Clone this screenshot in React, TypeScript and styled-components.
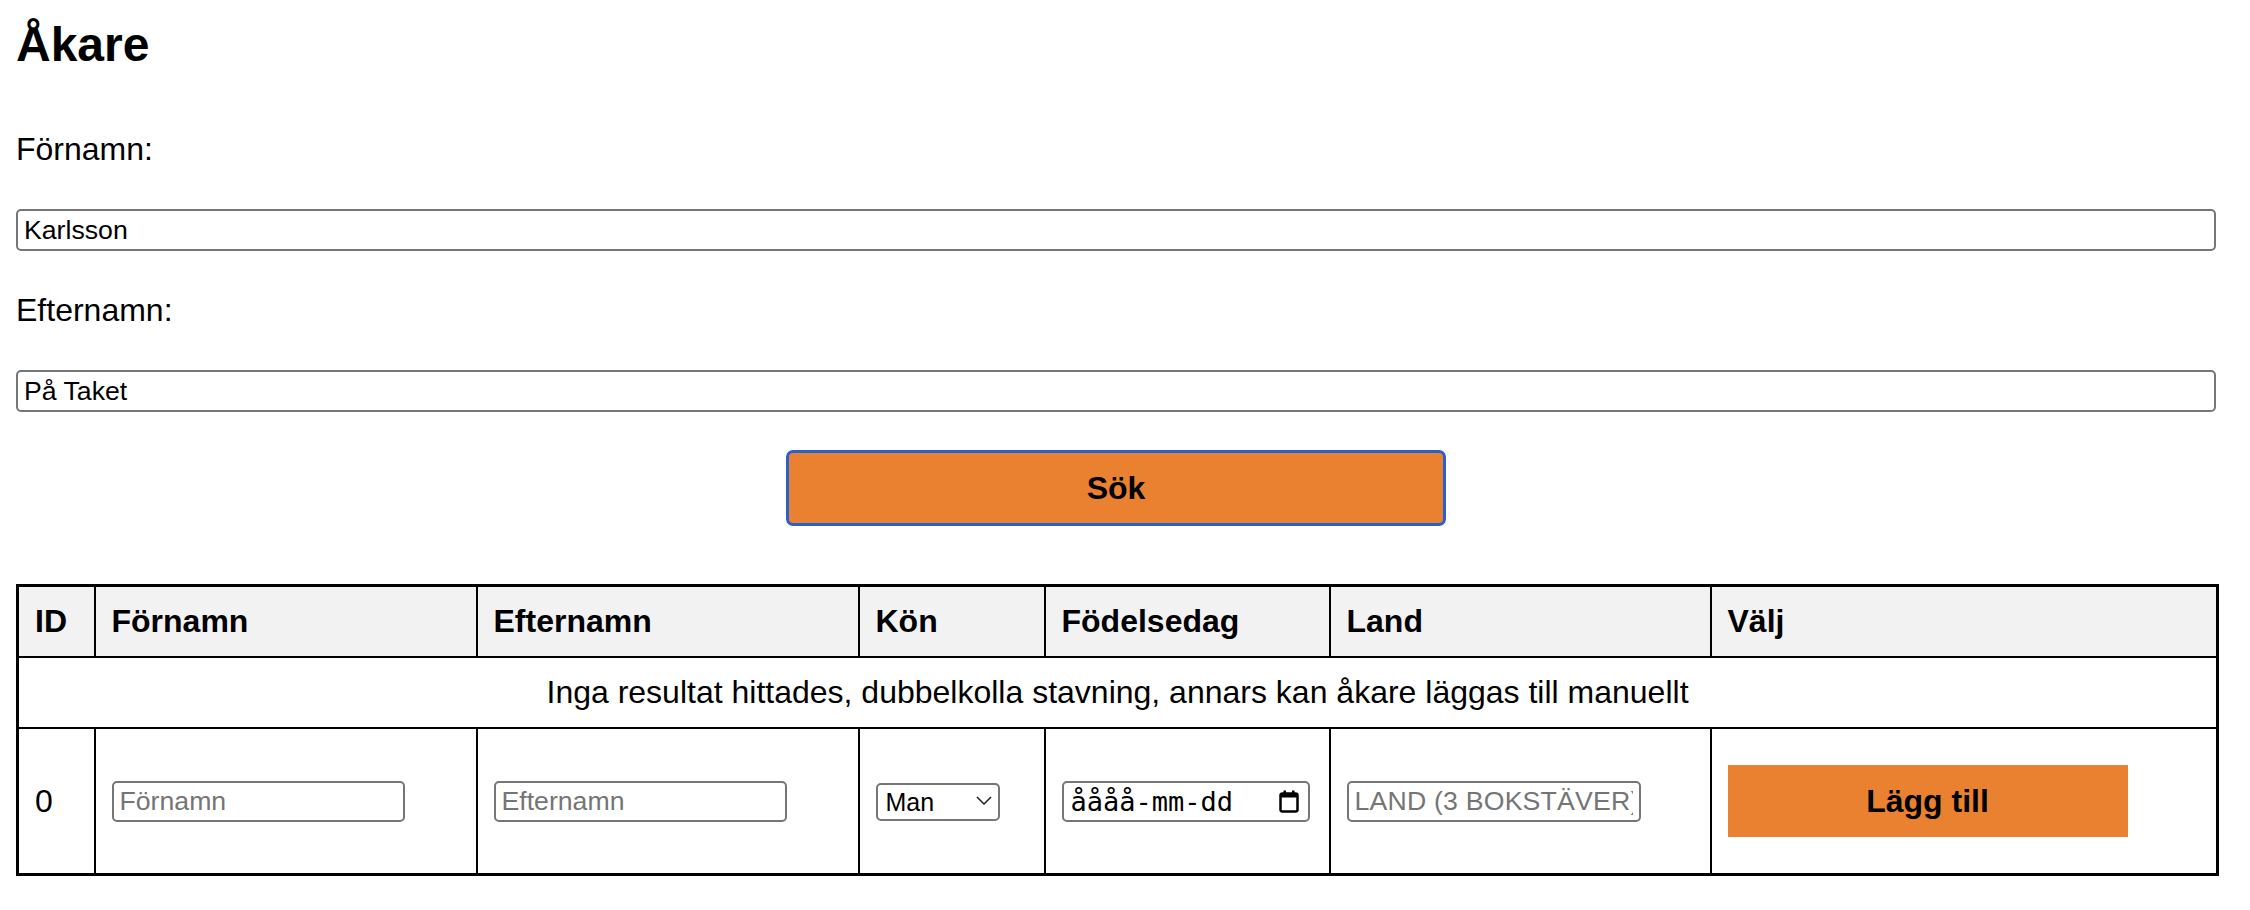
import * as React from 'react';
import styled, { createGlobalStyle } from 'styled-components';

const GlobalStyle = createGlobalStyle`
	html,
	body {
		margin: 0;
		padding: 0;
		background: #fff;
	}
	body {
		font-family: 'Liberation Sans', Arial, Helvetica, sans-serif;
		color: #000;
	}
`;

const orange = '#e98131';

const Page = styled.main`
	width: 2200px;
	padding: 18px 0 0 16px;
	display: flex;
	flex-direction: column;
`;

const Title = styled.h2`
	margin: 0 0 59px;
	font-size: 48px;
	line-height: 54px;
	font-weight: 700;
`;

const FieldLabel = styled.label`
	display: block;
	font-size: 32px;
	line-height: 37px;
	margin-bottom: 41px;
`;

const TextField = styled.input<{ $w?: number }>`
	box-sizing: border-box;
	width: ${(p) => (p.$w ? p.$w + 'px' : '100%')};
	height: ${(p) => (p.$w ? '41px' : '42px')};
	margin: 0;
	padding: 0 6px;
	border: 2px solid #767676;
	border-radius: 5px;
	font-family: inherit;
	font-size: 26.67px;
	color: #000;
	background: #fff;
	vertical-align: middle;
	&::placeholder {
		color: #757575;
	}
`;

const SearchField = styled(TextField)`
	margin-bottom: 41px;
`;

const CountryField = styled(TextField)`
	letter-spacing: 0.2px;
`;

const SearchButton = styled.button`
	align-self: center;
	width: 30%;
	height: 76px;
	margin: -3px 0 58px;
	border: 3px solid #2a5fd0;
	border-radius: 7px;
	background: ${orange};
	font-family: inherit;
	font-size: 32px;
	font-weight: 700;
	color: #000;
`;

const Table = styled.table`
	width: 100%;
	border-collapse: collapse;
	table-layout: fixed;
	border: 3px solid #000;
	font-size: 32px;
	line-height: 37px;
`;

const HeadCell = styled.th<{ $w: number }>`
	box-sizing: border-box;
	width: ${(p) => p.$w}px;
	background: #f2f2f2;
	border: 2px solid #000;
	padding: 16px;
	text-align: left;
	font-weight: 700;
`;

const Cell = styled.td<{ $center?: boolean }>`
	border: 2px solid #000;
	padding: 16px;
	text-align: ${(p) => (p.$center ? 'center' : 'left')};
	vertical-align: middle;
`;

const SelectWrap = styled.span`
	position: relative;
	display: inline-block;
	vertical-align: middle;
`;

const GenderSelect = styled.select`
	appearance: none;
	box-sizing: border-box;
	width: 124px;
	height: 38px;
	padding: 0 0 0 8px;
	border: 2px solid #767676;
	border-radius: 5px;
	background: #fff;
	font-family: inherit;
	font-size: 25px;
	color: #000;
`;

const Chevron = styled.svg`
	position: absolute;
	right: 8px;
	top: 14px;
	pointer-events: none;
`;

const DateField = styled.div`
	box-sizing: border-box;
	display: flex;
	align-items: center;
	justify-content: space-between;
	width: 248px;
	height: 41px;
	padding: 0 9px 0 7px;
	border: 2px solid #767676;
	border-radius: 5px;
	font-family: 'DejaVu Sans Mono', 'Liberation Mono', monospace;
	font-size: 27px;
	color: #000;
`;

const AddButton = styled.button`
	display: block;
	width: 400px;
	height: 72px;
	margin: 20px 0;
	border: none;
	background: ${orange};
	font-family: inherit;
	font-size: 32px;
	font-weight: 700;
	color: #000;
`;

const columns: [string, number][] = [
	['ID', 77],
	['Förnamn', 382],
	['Efternamn', 382],
	['Kön', 186],
	['Födelsedag', 285],
	['Land', 381],
	['Välj', 507],
];

const CalendarIcon = () => (
	<svg width="20" height="23" viewBox="0 0 20 23">
		<rect x="1.5" y="3.5" width="17" height="18" rx="2" fill="none" stroke="#000" strokeWidth="2.5" />
		<rect x="1.5" y="3.5" width="17" height="4" fill="#000" />
		<rect x="4.5" y="0.5" width="2.5" height="4" fill="#000" />
		<rect x="13" y="0.5" width="2.5" height="4" fill="#000" />
	</svg>
);

export default function App() {
	return (
		<>
			<GlobalStyle />
			<Page>
				<Title>Åkare</Title>
				<FieldLabel htmlFor="fornamn">Förnamn:</FieldLabel>
				<SearchField id="fornamn" defaultValue="Karlsson" />
				<FieldLabel htmlFor="efternamn">Efternamn:</FieldLabel>
				<SearchField id="efternamn" defaultValue="På Taket" />
				<SearchButton>Sök</SearchButton>

				<Table>
					<thead>
						<tr>
							{columns.map(([name, w]) => (
								<HeadCell key={name} $w={w}>
									{name}
								</HeadCell>
							))}
						</tr>
					</thead>
					<tbody>
						<tr>
							<Cell colSpan={7} $center>
								Inga resultat hittades, dubbelkolla stavning, annars kan åkare läggas till manuellt
							</Cell>
						</tr>
						<tr>
							<Cell>0</Cell>
							<Cell>
								<TextField $w={293} placeholder="Förnamn" />
							</Cell>
							<Cell>
								<TextField $w={293} placeholder="Efternamn" />
							</Cell>
							<Cell>
								<SelectWrap>
									<GenderSelect defaultValue="Man">
										<option>Man</option>
										<option>Kvinna</option>
									</GenderSelect>
									<Chevron width="16" height="9" viewBox="0 0 16 9">
										<path d="M1 1 L8 8 L15 1" fill="none" stroke="#222" strokeWidth="1.5" />
									</Chevron>
								</SelectWrap>
							</Cell>
							<Cell>
								<DateField>
									<span>åååå-mm-dd</span>
									<CalendarIcon />
								</DateField>
							</Cell>
							<Cell>
								<CountryField $w={294} placeholder="LAND (3 BOKSTÄVER)" />
							</Cell>
							<Cell>
								<AddButton>Lägg till</AddButton>
							</Cell>
						</tr>
					</tbody>
				</Table>
			</Page>
		</>
	);
}
